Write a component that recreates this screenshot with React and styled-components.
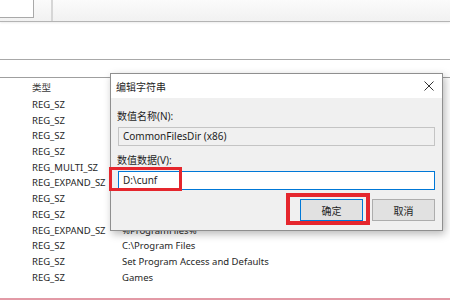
import React from 'react';
import styled, { createGlobalStyle } from 'styled-components';

const GlobalStyle = createGlobalStyle`
  html, body {
    margin: 0;
    padding: 0;
    background: #ffffff;
  }
  body {
    font-family: "Noto Sans", "Noto Sans CJK SC", sans-serif;
    font-size: 9.5px;
    color: #262626;
  }
`;

const Screen = styled.div`
  width: 450px;
  height: 300px;
  position: relative;
  overflow: hidden;
  display: flex;
  flex-direction: column;
  background: #fff;
`;

const Toolbar = styled.div`
  height: 21px;
  flex: none;
  display: flex;
  background: linear-gradient(#fbfbfb, #f1f1f1);
  border-bottom: 1px solid #b4b4b4;
  box-shadow: 0 1px 2px rgba(0, 0, 0, 0.08);
`;

const ToolBox = styled.div`
  width: 33px;
  height: 17px;
  background: #fff;
  border-right: 1px solid #a9a9a9;
  border-bottom: 1px solid #a9a9a9;
`;

const ToolDivider = styled.div`
  width: 2px;
  margin-left: 17px;
  background: #d6d6d6;
`;

const AddressArea = styled.div`
  height: 37px;
  flex: none;
  border-bottom: 1px solid #a8a8a8;
`;

const Gap = styled.div`
  height: 17px;
  flex: none;
`;

const List = styled.div`
  flex: 1;
  border-top: 1px solid #9f9f9f;
  border-bottom: 2px solid #e39aa6;
`;

const Row = styled.div`
  display: grid;
  grid-template-columns: 32px 90px 1fr;
  height: ${(p) => (p.$header ? '19px' : '15.7px')};
  line-height: ${(p) => (p.$header ? '19px' : '15.7px')};
  white-space: nowrap;
  color: ${(p) => (p.$header ? '#3a3a3a' : '#262626')};
`;

const Cell = styled.span`
  overflow: hidden;
`;

const Dialog = styled.div`
  position: absolute;
  left: 110px;
  top: 73px;
  width: 331px;
  height: 156px;
  border: 1px solid #8f8f8f;
  background: #f0f0f0;
  box-shadow: 2px 3px 8px rgba(0, 0, 0, 0.28);
  display: flex;
  flex-direction: column;
  font-size: 10px;
`;

const TitleBar = styled.div`
  height: 24px;
  flex: none;
  background: #fff;
  display: flex;
  align-items: center;
  justify-content: space-between;
  padding: 0 8px 0 5px;
  color: #1e1e1e;
`;

const Body = styled.div`
  padding: 10px 7px 0 7px;
  display: flex;
  flex-direction: column;
`;

const Label = styled.div`
  height: 16px;
  line-height: 16px;
  margin-top: ${(p) => p.$top || 0}px;
  margin-left: -1px;
  color: #1e1e1e;
`;

const Field = styled.div`
  box-sizing: border-box;
  height: 19px;
  margin-top: 3px;
  padding: 0 4px;
  line-height: 17px;
  border: 1px solid ${(p) => (p.$focus ? '#0078d7' : '#c4c4c4')};
  background: ${(p) => (p.$focus ? '#ffffff' : '#f0f0f0')};
  color: #1e1e1e;
  white-space: nowrap;
`;

const Buttons = styled.div`
  display: flex;
  justify-content: flex-end;
  gap: 9px;
  margin-top: 9px;
`;

const Button = styled.div`
  box-sizing: border-box;
  width: 63px;
  height: 22px;
  display: flex;
  align-items: center;
  justify-content: center;
  background: #e1e1e1;
  border: 1px solid ${(p) => (p.$primary ? '#0078d7' : '#adadad')};
  color: #1e1e1e;
`;

const Highlight = styled.div`
  position: absolute;
  box-sizing: border-box;
  border: ${(p) => p.$w}px solid #e5262d;
  pointer-events: none;
`;

// data of the rows covered by the dialog cannot be seen, so it stays empty
const rows = [
  ['REG_SZ', ''],
  ['REG_SZ', ''],
  ['REG_SZ', ''],
  ['REG_SZ', ''],
  ['REG_MULTI_SZ', ''],
  ['REG_EXPAND_SZ', ''],
  ['REG_SZ', ''],
  ['REG_SZ', ''],
  ['REG_EXPAND_SZ', '%ProgramFiles%'],
  ['REG_SZ', 'C:\\Program Files'],
  ['REG_SZ', 'Set Program Access and Defaults'],
  ['REG_SZ', 'Games'],
];

const CloseIcon = () => (
  <svg width="10" height="10" viewBox="0 0 10 10">
    <path d="M0.5 0.5 L9.5 9.5 M9.5 0.5 L0.5 9.5" stroke="#333" strokeWidth="1" fill="none" />
  </svg>
);

export default function App() {
  return (
    <>
      <GlobalStyle />
      <Screen>
        <Toolbar>
          <ToolBox />
          <ToolDivider />
        </Toolbar>
        <AddressArea />
        <Gap />
        <List>
          <Row $header>
            <Cell />
            <Cell>类型</Cell>
            <Cell />
          </Row>
          {rows.map(([type, data], i) => (
            <Row key={i}>
              <Cell />
              <Cell>{type}</Cell>
              <Cell>{data}</Cell>
            </Row>
          ))}
        </List>

        <Dialog>
          <TitleBar>
            <span>编辑字符串</span>
            <CloseIcon />
          </TitleBar>
          <Body>
            <Label>数值名称(N):</Label>
            <Field>CommonFilesDir (x86)</Field>
            <Label $top={6}>数值数据(V):</Label>
            <Field $focus>D:\cunf</Field>
            <Buttons>
              <Button $primary>确定</Button>
              <Button>取消</Button>
            </Buttons>
          </Body>
        </Dialog>

        <Highlight $w={3} style={{ left: 109, top: 167, width: 73, height: 24 }} />
        <Highlight $w={4} style={{ left: 286, top: 193, width: 84, height: 32 }} />
      </Screen>
    </>
  );
}
